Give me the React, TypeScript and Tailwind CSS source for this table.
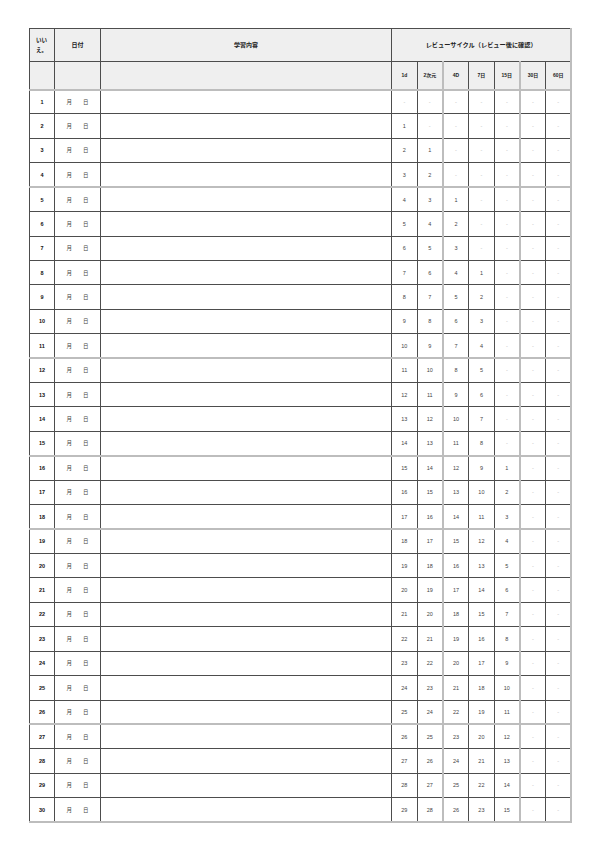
import React from "react";

const LIGHT_ROWS = new Set([4, 11, 15, 18, 26, 30]);
const OFFSETS = [1, 2, 4, 7, 15, 30, 60];
const LABELS = ["1d", "2次元", "4D", "7日", "15日", "30日", "60日"];

function cellVal(row: number, off: number, idx: number): string {
  if (idx >= 5) return "-";
  const v = row - off;
  return v >= 1 ? String(v) : "-";
}

export default function App() {
  const rows = Array.from({ length: 30 }, (_, i) => i + 1);
  const base = "border border-[#4d4d4d] p-0 text-center align-middle";
  const lightR = "border-r-2 border-r-[#bdbdbd]";
  return (
    <div className="bg-white w-[600px] h-[848px] pt-[28px] pl-[29px] font-['Liberation_Sans','Noto_Sans_CJK_JP',sans-serif]">
      <table className="border-collapse table-fixed w-[542px]">
        <colgroup>
          <col className="w-[25px]" />
          <col className="w-[46px]" />
          <col className="w-[291px]" />
          {LABELS.map((l) => (
            <col key={l} className="w-[25.7px]" />
          ))}
        </colgroup>
        <thead>
          <tr className="h-[33px] bg-[#efefef]">
            <th className={`${base} text-[5.5px] font-bold text-[#222]`}>
              <div className="text-left pl-[6px] leading-[10px]">
                いい
                <br />
                え。
              </div>
            </th>
            <th className={`${base} text-[6px] font-bold text-[#222]`}>日付</th>
            <th className={`${base} text-[6px] font-bold text-[#222]`}>学習内容</th>
            <th colSpan={7} className={`${base} ${lightR} text-[6.2px] font-bold text-[#222]`}>
              レビューサイクル（レビュー後に確認）
            </th>
          </tr>
          <tr className="h-[28px] bg-[#efefef]">
            <th className={`${base} border-b-2 border-b-[#bdbdbd]`}></th>
            <th className={`${base} border-b-2 border-b-[#bdbdbd]`}></th>
            <th className={`${base} border-b-2 border-b-[#bdbdbd]`}></th>
            {LABELS.map((l, idx) => (
              <th
                key={l}
                className={`${base} border-b-2 border-b-[#bdbdbd] text-[5px] font-bold text-[#222] ${
                  idx === 1 || idx === 4 || idx === 6 ? lightR : ""
                }`}
              >
                {l}
              </th>
            ))}
          </tr>
        </thead>
        <tbody>
          {rows.map((r) => {
            const lb = LIGHT_ROWS.has(r) ? "border-b-2 border-b-[#bdbdbd]" : "";
            return (
              <tr key={r} className="h-[24.43px]">
                <td className={`${base} ${lb} text-[5.5px] font-bold text-[#111]`}>{r}</td>
                <td className={`${base} ${lb} text-[5.5px] text-[#444]`}>
                  <div className="flex justify-center gap-[11px]">
                    <span>月</span>
                    <span>日</span>
                  </div>
                </td>
                <td className={`${base} ${lb}`}></td>
                {OFFSETS.map((off, idx) => {
                  const v = cellVal(r, off, idx);
                  return (
                    <td
                      key={off}
                      className={`${base} ${lb} text-[5.5px] ${
                        v === "-" ? "text-[#bbbbbb]" : "text-[#444]"
                      } ${idx === 1 || idx === 4 || idx === 6 ? lightR : ""}`}
                    >
                      {v}
                    </td>
                  );
                })}
              </tr>
            );
          })}
        </tbody>
      </table>
    </div>
  );
}
